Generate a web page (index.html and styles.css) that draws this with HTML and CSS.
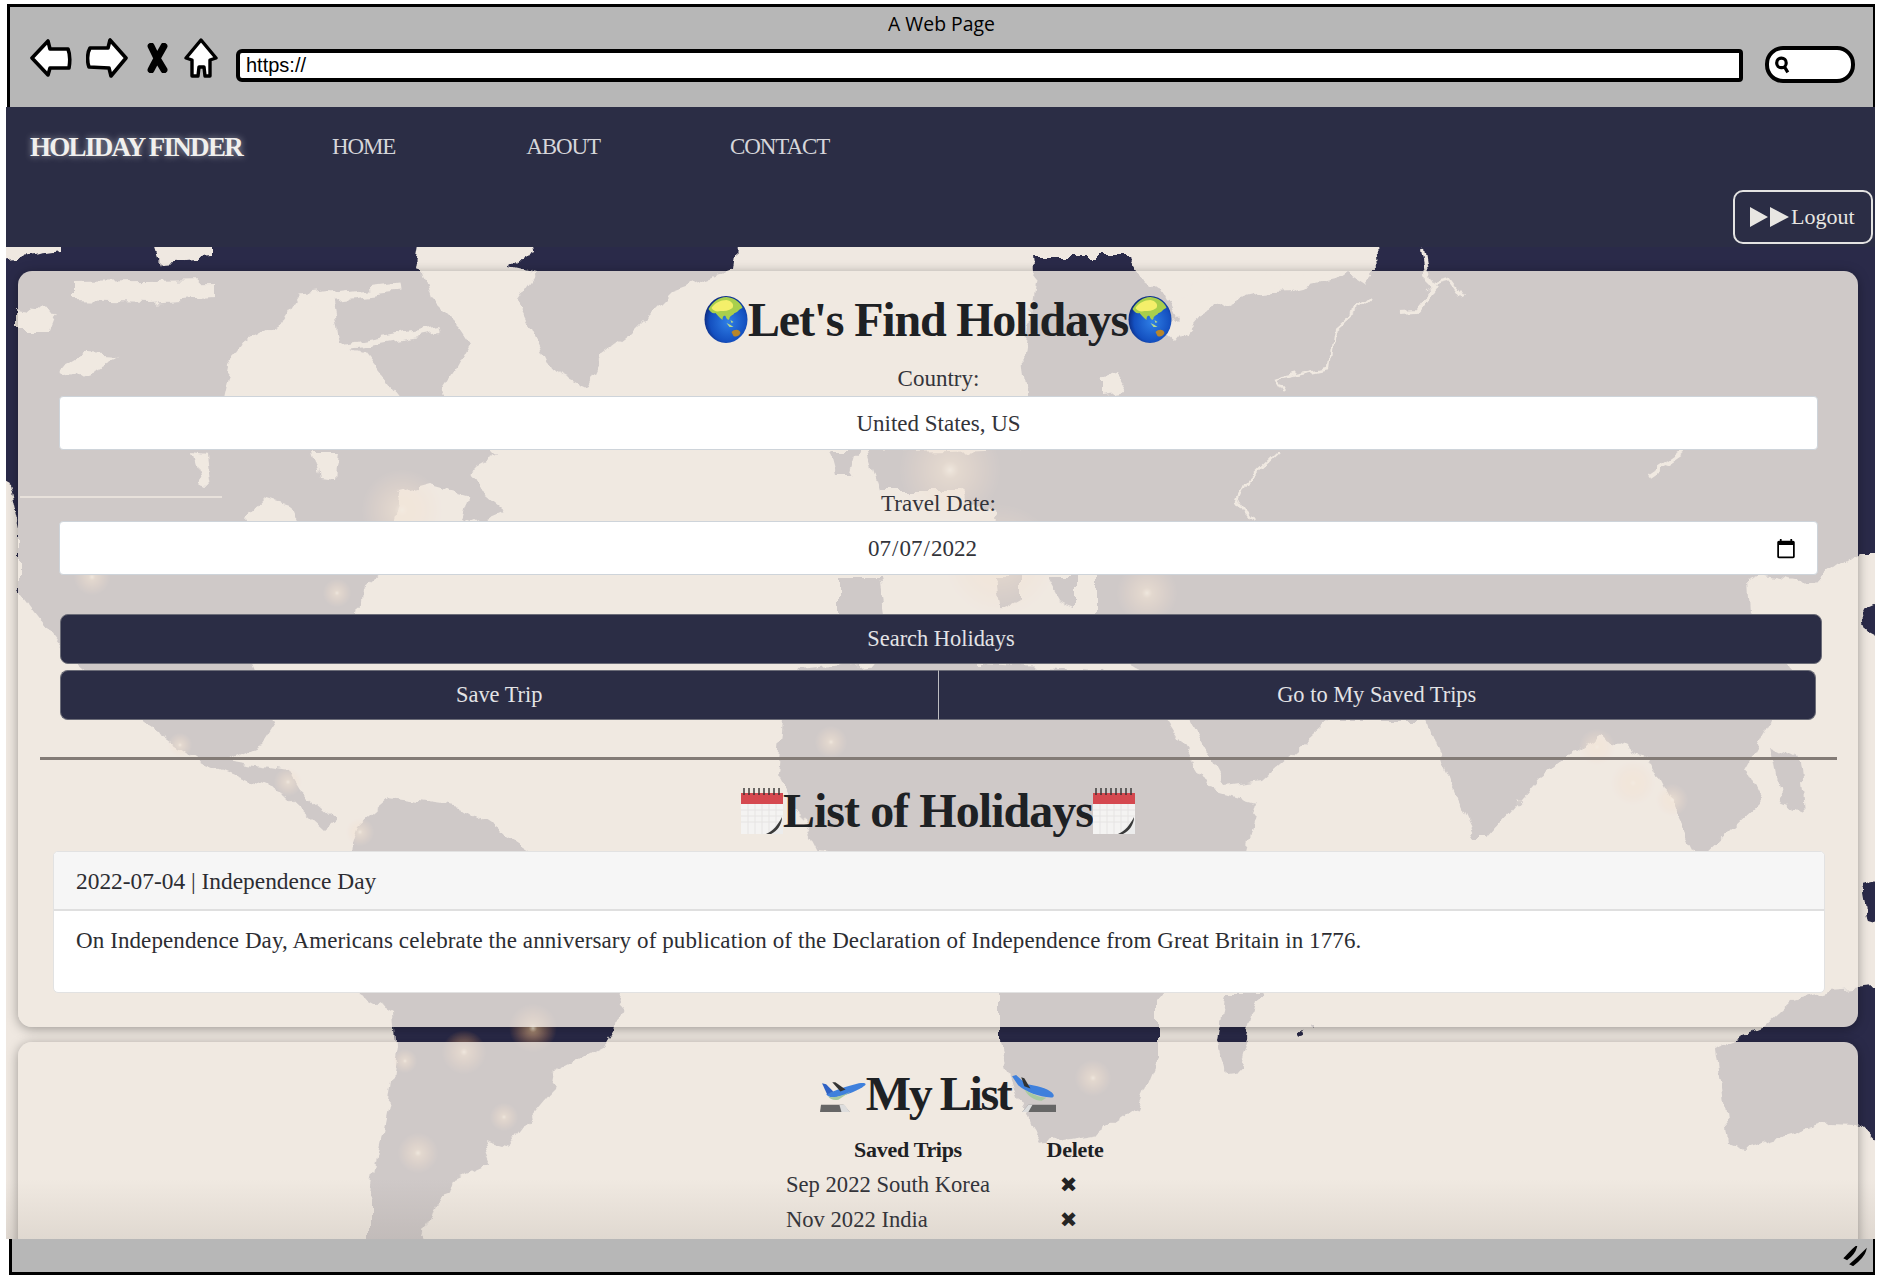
FILE: index.html
```html
<!DOCTYPE html>
<html lang="en">
<head>
  <meta charset="UTF-8">
  <meta name="viewport" content="width=device-width, initial-scale=1.0">
  <link rel="stylesheet" href="styles.css">
  <title>Holiday Finder</title>
</head>
<body>
  <svg class="defs" aria-hidden="true">
    <defs>
      <radialGradient id="sea" cx="55%" cy="55%" r="60%">
        <stop offset="0" stop-color="#2f7fe6"/>
        <stop offset="0.7" stop-color="#1450c0"/>
        <stop offset="1" stop-color="#0a2170"/>
      </radialGradient>
      <radialGradient id="glow">
        <stop offset="0" stop-color="#fff3da" stop-opacity="0.9"/>
        <stop offset="0.18" stop-color="#ffc98c" stop-opacity="0.55"/>
        <stop offset="1" stop-color="#ff9a50" stop-opacity="0"/>
      </radialGradient>
      <filter id="rough" x="-2%" y="-2%" width="104%" height="104%">
        <feTurbulence type="fractalNoise" baseFrequency="0.05" numOctaves="3" seed="4"/>
        <feDisplacementMap in="SourceGraphic" scale="16" xChannelSelector="R" yChannelSelector="G"/>
      </filter>
      <symbol id="globe" viewBox="0 0 43 47">
        <ellipse cx="21.5" cy="23.5" rx="21.5" ry="23.5" fill="url(#sea)"/>
        <path d="M4 13 C8 6 14 1 22 1 C30 2 36 6 38 12 C34 13 33 17 30 17 C28 20 26 19 25 22 C25 25 22 24 21 20 C19 19 18 21 18 24 C15 22 13 19 11 17 C8 18 6 16 4 13Z" fill="#a9cf4c"/>
        <path d="M7 12 C10 7 16 4 22 4 C27 5 30 8 28 12 C24 15 20 15 16 15 C12 16 9 15 7 12Z" fill="#f4ef6a"/>
        <path d="M22 27 L26 29 L29 31 L25 31Z M26 24 L29 26 L27 27Z" fill="#b9dc8a"/>
        <path d="M27 36 C30 33 35 33 36 37 C34 41 31 41 29 40Z" fill="#b8862a"/>
      </symbol>
      <symbol id="calendar" viewBox="0 0 42 47">
        <rect x="0" y="6" width="42" height="41" fill="#f4f3f2"/>
        <rect x="0" y="6" width="42" height="11" fill="#d5484f"/>
        <path d="M3 1V8M8 1V8M13 1V8M18 1V8M23 1V8M28 1V8M33 1V8M38 1V8" stroke="#333" stroke-width="1.4"/>
        <path d="M0 23H42M0 29H42M0 35H42M7 17V47M14 17V47M21 17V47M28 17V47M35 17V47" stroke="#e6e4e3" stroke-width="1"/>
        <path d="M26 47 L42 31 L42 47Z" fill="#ececec"/>
        <path d="M25 47 C32 44 37 38 41 30 C41 38 36 44 30 47Z" fill="#3a3a3a"/>
      </symbol>
      <symbol id="plane-up" viewBox="0 0 45 39">
        <path d="M6 21 C14 17 26 13 38 10 C43 9 46 10 44 12 C38 17 26 22 14 24 C10 24 8 23 6 21Z" fill="#3f80dc"/>
        <path d="M2 10 L6 11 L13 18 L7 21Z" fill="#2f62c4"/>
        <path d="M12 9 L15 9 L25 16 L20 18Z" fill="#333"/>
        <path d="M8 23 C15 25 24 21 30 18 L18 26 C14 27 10 26 8 23Z" fill="#a8c9a0"/>
        <path d="M1 31 L23 31 L29 38 L0 38Z" fill="#666"/>
        <path d="M19 31 L24 31 L29 38 L21 38Z" fill="#ddd"/>
      </symbol>
      <symbol id="plane-down" viewBox="0 0 45 39">
        <path d="M2 3 L6 2 L16 11 C26 12 36 15 41 19 C44 22 43 24 40 24 C28 23 16 19 8 12Z" fill="#3f80dc"/>
        <path d="M11 4 L14 5 L20 15 L14 13Z" fill="#333"/>
        <path d="M14 16 C22 21 30 24 36 24 L31 27 C24 27 18 23 14 16Z" fill="#a8c9a0"/>
        <path d="M18 31 L45 31 L45 38 L12 38Z" fill="#666"/>
        <path d="M18 31 L22 31 L18 38 L12 38Z" fill="#ddd"/>
      </symbol>
    </defs>
  </svg>

  <div class="frame">
    <header class="browser-top">
      <div class="browser-title">A Web Page</div>
      <div class="toolbar">
        <svg class="tool tool-arrow" viewBox="0 0 42 40"><path d="M2 20 L18 3 L20 11 L38 11 C40 16 40 24 39 30 L20 30 L18 37Z" fill="#fff" stroke="#000" stroke-width="3.6" stroke-linejoin="round"/></svg>
        <svg class="tool tool-arrow" viewBox="0 0 42 40"><path d="M40 20 L24 2 L22 10 L4 10 C1 15 1 24 3 29 L23 30 L25 38Z" fill="#fff" stroke="#000" stroke-width="3.6" stroke-linejoin="round"/></svg>
        <svg class="tool tool-x" viewBox="0 0 20 28"><path d="M4 3 C7 10 12 19 16 25M16 3 C12 10 7 19 4 25" fill="none" stroke="#000" stroke-width="6.5" stroke-linecap="round"/></svg>
        <svg class="tool tool-home" viewBox="0 0 34 41"><path d="M17 2 L32 20 L26 22 L26 38 L21 38 L20 29 L15 29 L14 38 L8 38 L8 22 L2 20Z" fill="#fff" stroke="#000" stroke-width="3.4" stroke-linejoin="round"/></svg>
        <div class="url-bar">https://</div>
        <div class="search-pill">
          <svg class="search-glass" viewBox="0 0 16 18"><circle cx="7" cy="7" r="4.5" fill="none" stroke="#000" stroke-width="3"/><path d="M10 11 L13 16" stroke="#000" stroke-width="3"/></svg>
        </div>
      </div>
    </header>

    <nav class="site-nav">
      <div class="nav-row">
        <a class="brand">HOLIDAY FINDER</a>
        <a class="nav-link nav-home">HOME</a>
        <a class="nav-link nav-about">ABOUT</a>
        <a class="nav-link">CONTACT</a>
      </div>
      <div class="nav-row nav-row-end">
        <button class="logout">
          <svg class="logout-icon" viewBox="0 0 39 20"><path d="M0 0 L18 10 L0 20Z M20 0 L39 10 L20 20Z" fill="#e8e6e2"/></svg>Logout
        </button>
      </div>
    </nav>

    <main class="page">
      <svg class="world-map" viewBox="6 247 1869 992" preserveAspectRatio="none" aria-hidden="true">
        <rect x="6" y="247" width="1869" height="992" fill="#efe8e1"/>
        <g fill="#2b2c48" filter="url(#rough)">
          <!-- north and central america -->
          <path d="M-10 262 L61 252 L61 240 L153 240 L160 262 L210 258 L210 240 L420 240 L415 270 L421 272 L430 300 L460 330 L470 345 L455 372 L440 395 L498 455 L470 470 L480 490 L505 510 L470 525 L400 500 L394 520 L380 575 L362 590 L360 613 L300 640 L250 660 L276 723 L262 745 L228 760 L288 770 L300 790 L336 820 L324 830 L288 797 L204 763 L144 723 L78 667 L36 613 L19 590 L19 530 L8 480 L-10 470Z"/>
          <!-- greenland -->
          <path d="M510 267 L536 250 L534 240 L738 240 L734 270 L671 293 L627 337 L600 357 L586 387 L551 370 L532 330 L517 300 L536 273Z"/>
          <!-- south america -->
          <path d="M354 843 L360 823 L390 797 L462 807 L528 850 L622 994 L615 1028 L606 1043 L555 1070 L551 1093 L526 1123 L508 1147 L484 1140 L493 1163 L455 1180 L450 1197 L433 1203 L419 1250 L370 1250 L370 1197 L375 1167 L388 1107 L397 1043 L395 1013 L361 994 L350 900Z"/>
          <!-- eurasia -->
          <path d="M1036 257 L1126 257 L1135 272 L1168 295 L1180 320 L1166 335 L1175 342 L1200 312 L1225 305 L1250 293 L1290 290 L1334 280 L1345 272 L1365 285 L1378 270 L1376 240 L1885 240 L1885 553 L1858 553 L1821 580 L1796 582 L1760 575 L1748 580 L1750 613 L1775 640 L1790 670 L1770 720 L1745 765 L1762 800 L1700 860 L1650 760 L1600 735 L1576 750 L1540 777 L1488 837 L1475 837 L1445 770 L1426 720 L1330 720 L1262 780 L1225 785 L1190 720 L1170 690 L1097 640 L1097 575 L992 520 L1022 450 L1028 395 L1024 353 L1037 270Z"/>
          <!-- europe -->
          <path d="M838 577 L880 577 L890 640 L838 640Z"/>
          <path d="M995 577 L1022 577 L1022 600 L1000 612Z"/>
          <path d="M1047 577 L1077 577 L1077 606 L1060 600Z"/>
          <path d="M828 450 L858 450 L850 477 L835 477Z"/>
          <path d="M868 452 L1030 448 L1000 520 L960 490 L880 490Z"/>
          <!-- africa -->
          <path d="M783 720 L800 670 L900 660 L1100 670 L1166 720 L1211 790 L1258 803 L1246 850 L1190 960 L1157 1000 L1157 1057 L1137 1107 L1100 1133 L1040 1143 L1030 1127 L1010 1073 L1000 1040 L1000 960 L990 880 L960 860 L818 850 L778 773Z"/>
          <!-- islands and australia -->
          <path d="M1225 994 L1260 994 L1250 1030 L1240 1070 L1225 1072 L1217 1040Z"/>
          <path d="M1480 817 L1489 822 L1488 838 L1480 834Z"/>
          <path d="M1770 745 L1800 760 L1805 810 L1780 800Z"/>
          <path d="M1862 610 L1885 600 L1885 640 L1866 630Z M1862 885 L1885 880 L1885 925 L1868 920Z"/>
          <path d="M1716 1047 L1729 1042 L1764 1028 L1794 1000 L1829 990 L1885 985 L1885 1150 L1859 1123 L1829 1122 L1794 1133 L1746 1147 L1729 1140Z"/>
          <circle cx="1301" cy="1032" r="3"/>
          <circle cx="1316" cy="1026" r="2"/>
        </g>
        <!-- bays, lakes and borders -->
        <g fill="#efe8e1" filter="url(#rough)">
          <path d="M222 400 L230 363 L245 343 L285 320 L300 296 L332 296 L340 345 L364 352 L402 400Z"/>
          <path d="M73 282 L214 280 L214 298 L150 302 L73 300Z"/>
          <path d="M15 307 L57 312 L50 330 L15 330Z"/>
          <path d="M57 370 L85 353 L119 355 L95 368 L70 378Z"/>
          <path d="M192 452 L206 454 L210 485 L200 482Z"/>
          <path d="M312 452 L339 452 L336 480 L320 478Z"/>
          <path d="M245 518 L265 497 L290 505 L299 525 L250 525Z"/>
          <path d="M394 520 L400 492 L430 484 L470 495 L462 525Z"/>
          <path d="M1198 280 L1340 272 L1332 276 L1225 300 L1190 322 L1176 300Z"/>
          <path d="M1100 378 L1116 372 L1130 392 L1100 396Z"/>
          <g fill="none" stroke="#efe8e1" stroke-linejoin="round">
            <path d="M1373 297 L1334 330 L1329 367 L1274 379 L1284 395" stroke-width="2.5"/>
            <path d="M1279 450 L1244 484 L1237 500 L1252 520" stroke-width="2.5"/>
            <path d="M1423 247 L1428 280 L1433 290 L1418 310 L1398 311" stroke-width="4"/>
            <path d="M1433 284 L1450 280 L1463 298" stroke-width="2.5"/>
            <path d="M1682 452 L1650 474" stroke-width="4"/>
            <path d="M300 300 L400 288" stroke-width="9"/>
            <path d="M330 350 L440 330" stroke-width="6"/>
          </g>
        </g>
        <path d="M20 497 H222" fill="none" stroke="#efe8e1" stroke-width="1.5"/>
        <g fill="url(#glow)">
          <circle cx="92" cy="577" r="18"/>
          <circle cx="337" cy="593" r="14"/>
          <circle cx="402" cy="510" r="40"/>
          <circle cx="533" cy="1028" r="24"/>
          <circle cx="464" cy="1052" r="22"/>
          <circle cx="405" cy="1061" r="12"/>
          <circle cx="504" cy="1117" r="14"/>
          <circle cx="418" cy="1153" r="20"/>
          <circle cx="1093" cy="1078" r="18"/>
          <circle cx="950" cy="470" r="50"/>
          <circle cx="1000" cy="560" r="55"/>
          <circle cx="1147" cy="593" r="30"/>
          <circle cx="1597" cy="747" r="18"/>
          <circle cx="1633" cy="783" r="22"/>
          <circle cx="1672" cy="800" r="16"/>
          <circle cx="288" cy="782" r="14"/>
          <circle cx="360" cy="832" r="14"/>
          <circle cx="180" cy="745" r="12"/>
          <circle cx="831" cy="742" r="16"/>
        </g>
      </svg>

      <section class="card card-search">
        <h1 class="heading heading-find">
          <svg class="emoji emoji-globe"><use href="#globe"/></svg>Let's Find Holidays<svg class="emoji emoji-globe"><use href="#globe"/></svg>
        </h1>
        <form class="search-form">
          <label class="field-label">Country:</label>
          <input class="field" type="text" value="United States, US">
          <label class="field-label field-label-date">Travel Date:</label>
          <input class="field field-date" type="date" value="2022-07-07">
          <button class="btn btn-search" type="button">Search Holidays</button>
          <div class="btn-group">
            <button class="btn btn-half" type="button">Save Trip</button>
            <button class="btn btn-half" type="button">Go to My Saved Trips</button>
          </div>
        </form>
        <hr class="rule">
        <h2 class="heading heading-list">
          <svg class="emoji emoji-cal"><use href="#calendar"/></svg>List of Holidays<svg class="emoji emoji-cal"><use href="#calendar"/></svg>
        </h2>
        <div class="holiday">
          <div class="holiday-head">2022-07-04 | Independence Day</div>
          <div class="holiday-body">On Independence Day, Americans celebrate the anniversary of publication of the Declaration of Independence from Great Britain in 1776.</div>
        </div>
      </section>

      <section class="card card-list">
        <h2 class="heading heading-mine">
          <svg class="emoji emoji-plane"><use href="#plane-up"/></svg>My List<svg class="emoji emoji-plane"><use href="#plane-down"/></svg>
        </h2>
        <table class="trips">
          <thead>
            <tr><th>Saved Trips</th><th>Delete</th></tr>
          </thead>
          <tbody>
            <tr><td>Sep 2022 South Korea</td><td class="trip-x">✖</td></tr>
            <tr><td>Nov 2022 India</td><td class="trip-x">✖</td></tr>
          </tbody>
        </table>
      </section>
    </main>

    <footer class="browser-bottom">
      <svg class="grip" viewBox="0 0 24 20"><path d="M2 12 C6 8 9 4 13 1 C12 5 8 10 4 13Z M8 18 C13 14 17 10 22 5 C21 9 15 15 10 19Z" fill="#000" stroke="#000" stroke-width="2"/></svg>
    </footer>
  </div>
</body>
</html>
```

FILE: styles.css
```css
* {
  box-sizing: border-box;
}

html, body {
  margin: 0;
  background: #fff;
}

body {
  width: 1880px;
  height: 1282px;
  overflow: hidden;
  font-family: "Liberation Serif", serif;
  color: #2a2c30;
}

.defs {
  display: block;
  width: 0;
  height: 0;
}

.frame {
  width: 1869px;
  height: 1271px;
  margin: 4px 0 0 6px;
  display: flex;
  flex-direction: column;
}

/* mock browser chrome */
.browser-top {
  height: 103px;
  margin-left: 1px;
  background: #b7b7b7;
  border: solid #000;
  border-width: 3px 2px 0 3px;
}

.browser-title {
  height: 32px;
  padding-top: 5px;
  text-align: center;
  font: 19.4px/24px "Open Sans", sans-serif;
  color: #000;
}

.toolbar {
  display: flex;
  align-items: center;
  height: 38px;
  padding-left: 20px;
}

.tool {
  flex: none;
}

.tool-arrow {
  width: 42px;
  height: 40px;
  margin-right: 14px;
}

.tool-x {
  width: 23px;
  height: 30px;
  margin: 0 15px 0 4px;
}

.tool-home {
  width: 34px;
  height: 41px;
  margin-right: 18px;
}

.url-bar {
  flex: none;
  width: 1507px;
  height: 33px;
  margin-top: 14px;
  padding-left: 6px;
  background: #fff;
  border: 4px solid #000;
  border-radius: 6px 4px 4px 6px;
  font: 20px/25px "Liberation Sans", sans-serif;
  color: #000;
}

.search-pill {
  flex: none;
  display: flex;
  align-items: center;
  width: 90px;
  height: 37px;
  margin: 13px 0 0 22px;
  padding-left: 5px;
  background: #fff;
  border: 4px solid #000;
  border-radius: 18px;
}

.search-glass {
  width: 17px;
  height: 20px;
}

.site-nav {
  height: 140px;
  background: #2b2d45;
  display: flex;
  flex-direction: column;
}

.nav-row {
  display: flex;
  align-items: center;
  height: 80px;
  padding-left: 24px;
}

.nav-row-end {
  height: 60px;
  justify-content: flex-end;
  align-items: flex-start;
  padding-top: 3px;
  padding-right: 2px;
}

.brand {
  width: 302px;
  font-size: 27px;
  font-weight: bold;
  letter-spacing: -1.7px;
  color: #f1f0ee;
  text-shadow: 0 0 7px rgba(255, 255, 255, 0.55);
}

.nav-link {
  font-size: 23px;
  letter-spacing: -1.1px;
  color: #d6d6da;
}

.nav-home {
  margin-right: 131px;
}

.nav-about {
  margin-right: 130px;
}

.logout {
  display: flex;
  align-items: center;
  width: 140px;
  height: 54px;
  padding: 0 0 0 15px;
  background: #2b2d45;
  border: 2px solid #e4e3e2;
  border-radius: 10px;
  font: 22px "Liberation Serif", serif;
  color: #e8e6e2;
}

.logout-icon {
  width: 39px;
  height: 20px;
  margin-right: 2px;
}

/* page body */
.page {
  position: relative;
  flex: 1;
  min-height: 0;
  overflow: hidden;
  padding: 24px 17px 0 12px;
}

.page::after {
  content: "";
  position: absolute;
  left: 0;
  right: 0;
  bottom: 0;
  height: 60px;
  background: linear-gradient(rgba(80, 70, 60, 0), rgba(80, 70, 60, 0.1));
}

.world-map {
  position: absolute;
  left: 0;
  top: 0;
  width: 100%;
  height: 100%;
}

.card {
  position: relative;
  background: rgba(239, 232, 225, 0.84);
  border-radius: 14px;
  box-shadow: 0 2px 12px rgba(0, 0, 0, 0.35);
}

.card-search {
  height: 756px;
  padding-top: 19px;
}

.card-list {
  height: 300px;
  margin-top: 15px;
  padding-top: 25px;
}

.heading {
  display: flex;
  justify-content: center;
  align-items: center;
  margin: 0;
  color: #1e2124;
  font-size: 48px;
  font-weight: bold;
  letter-spacing: -1.2px;
}

.heading-find {
  height: 58px;
}

.heading-list {
  height: 62px;
  margin-top: 19px;
  letter-spacing: -0.95px;
}

.heading-mine {
  height: 52px;
  letter-spacing: -2.4px;
}

.emoji {
  flex: none;
}

.emoji-globe {
  width: 44px;
  height: 47px;
}

.emoji-cal {
  width: 42px;
  height: 47px;
}

.emoji-plane {
  width: 46px;
  height: 40px;
}

.search-form {
  display: flex;
  flex-direction: column;
  margin: 0 40px 0 41px;
  padding-top: 3px;
}

.field-label {
  height: 36px;
  margin-top: 9px;
  text-align: center;
  font-size: 23px;
  line-height: 37px;
  color: #33343a;
}

.field-label-date {
  margin-top: 35px;
}

.field {
  width: 100%;
  height: 54px;
  padding: 2px 12px 0;
  border: 1px solid #ced4da;
  border-radius: 4px;
  background: #fff;
  text-align: center;
  font: 23px "Liberation Serif", serif;
  color: #33343a;
}

.field-date::-webkit-calendar-picker-indicator {
  margin-right: 6px;
  width: 22px;
  height: 22px;
}

.btn {
  height: 50px;
  background: #2b2d45;
  border: 1px solid #6c6d78;
  border-radius: 8px;
  font: 22.4px "Liberation Serif", serif;
  color: #e3e3e6;
}

.btn-search {
  width: 1762px;
  margin: 39px 0 0 1px;
}

.btn-group {
  display: flex;
  width: 1756px;
  margin: 6px 0 0 1px;
}

.btn-half {
  flex: 1;
}

.btn-half:first-child {
  border-radius: 8px 0 0 8px;
  border-right-color: #bdbdc2;
}

.btn-half:last-child {
  border-radius: 0 8px 8px 0;
  border-left: 0;
}

.rule {
  width: 1797px;
  height: 3px;
  margin: 37px 0 0 22px;
  background: #837b76;
  border: 0;
}

.holiday {
  width: 1772px;
  height: 142px;
  margin: 10px 0 0 35px;
  background: #fff;
  border: 1px solid #e2e2e2;
  border-radius: 5px;
  overflow: hidden;
}

.holiday-head {
  height: 59px;
  padding: 0 22px;
  background: #f6f6f6;
  border-bottom: 2px solid #dfdfdf;
  font-size: 23.4px;
  line-height: 58px;
  color: #2c2d32;
}

.holiday-body {
  padding: 14px 22px;
  font-size: 23px;
  letter-spacing: 0.1px;
  line-height: 32px;
  color: #2c2d32;
}

.trips {
  margin: 13px 0 0 768px;
  border-collapse: collapse;
  font-size: 22.6px;
  color: #33343a;
}

.trips th {
  padding: 0;
  height: 35px;
  font-size: 22px;
  letter-spacing: -0.3px;
  color: #1e2124;
  text-align: center;
}

.trips td {
  padding: 0;
  height: 35px;
}

.trips th:first-child {
  width: 244px;
}

.trips th:last-child {
  width: 90px;
}

.trip-x {
  padding-right: 13px !important;
  text-align: center;
  font-family: "DejaVu Sans", sans-serif;
  font-size: 21px !important;
  color: #222;
}

.browser-bottom {
  display: flex;
  justify-content: flex-end;
  align-items: center;
  height: 36px;
  margin-left: 3px;
  padding-right: 6px;
  background: #b7b7b7;
  border: solid #000;
  border-width: 0 2px 3px 3px;
}

.grip {
  width: 24px;
  height: 20px;
}
```
